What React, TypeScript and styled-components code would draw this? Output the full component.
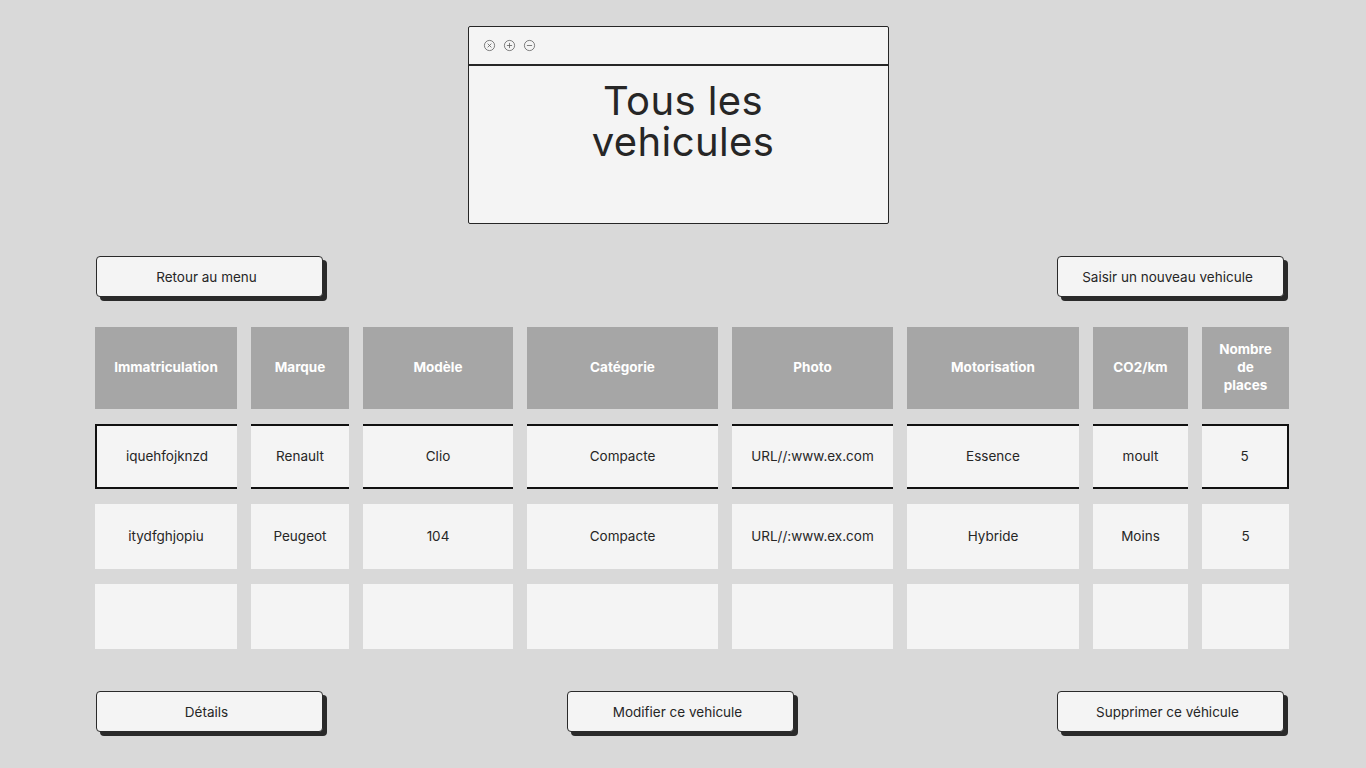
import styled, { createGlobalStyle } from "styled-components";

const GlobalStyle = createGlobalStyle`
  html, body {
    margin: 0;
    padding: 0;
    background: #d9d9d9;
  }
  body {
    font-family: Inter, "Liberation Sans", sans-serif;
    color: #222;
  }
`;

const columns = [
  { label: "Immatriculation", width: 142 },
  { label: "Marque", width: 98 },
  { label: "Modèle", width: 150 },
  { label: "Catégorie", width: 191 },
  { label: "Photo", width: 161 },
  { label: "Motorisation", width: 172 },
  { label: "CO2/km", width: 95 },
  { label: "Nombre de places", width: 87 },
];

const rows = [
  ["iquehfojknzd", "Renault", "Clio", "Compacte", "URL//:www.ex.com", "Essence", "moult", "5"],
  ["itydfghjopiu", "Peugeot", "104", "Compacte", "URL//:www.ex.com", "Hybride", "Moins", "5"],
  ["", "", "", "", "", "", "", ""],
];

function App() {
  return (
    <Page>
      <GlobalStyle />
      <WindowRow>
        <Window>
          <WindowBar>
            <WinIcon viewBox="0 0 14 14">
              <circle cx="7" cy="7" r="5.5" />
              <path d="M5 5 L9 9 M9 5 L5 9" />
            </WinIcon>
            <WinIcon viewBox="0 0 14 14">
              <circle cx="7" cy="7" r="5.5" />
              <path d="M7 4.2 V9.8 M4.2 7 H9.8" />
            </WinIcon>
            <WinIcon viewBox="0 0 14 14">
              <circle cx="7" cy="7" r="5.5" />
              <path d="M4.2 7 H9.8" />
            </WinIcon>
          </WindowBar>
          <Title>
            Tous les
            <br />
            vehicules
          </Title>
        </Window>
      </WindowRow>

      <Content>
        <Toolbar>
          <Button>Retour au menu</Button>
          <Button>Saisir un nouveau vehicule</Button>
        </Toolbar>

        <Table $cols={columns.map((c) => c.width + "px").join(" ")}>
          {columns.map((c) => (
            <HeadCell key={c.label} $narrow={c.width < 90}>
              {c.label}
            </HeadCell>
          ))}
          {rows.map((row, r) =>
            row.map((value, i) => (
              <Cell
                key={r + "-" + i}
                $selected={r === 0}
                $first={i === 0}
                $last={i === row.length - 1}
              >
                {value}
              </Cell>
            ))
          )}
        </Table>

        <Toolbar $bottom>
          <Button>Détails</Button>
          <Button $middle>Modifier ce vehicule</Button>
          <Button $end>Supprimer ce véhicule</Button>
        </Toolbar>
      </Content>
    </Page>
  );
}

export default App;

const Page = styled.div`
  width: 1366px;
  height: 768px;
  padding-top: 26px;
  box-sizing: border-box;
  overflow: hidden;
`;

const WindowRow = styled.div`
  display: flex;
  justify-content: center;
  padding-right: 9px;
`;

const Window = styled.div`
  width: 421px;
  height: 198px;
  box-sizing: border-box;
  border: 1.5px solid #262626;
  border-radius: 2px;
  background: #f4f4f4;
`;

const WindowBar = styled.div`
  height: 39px;
  box-sizing: border-box;
  border-bottom: 2.5px solid #262626;
  display: flex;
  align-items: center;
  gap: 7px;
  padding-left: 14px;
`;

const WinIcon = styled.svg`
  width: 13px;
  height: 13px;
  fill: none;
  stroke: #555;
  stroke-width: 0.8;
`;

const Title = styled.h1`
  margin: 14px 0 0;
  padding-left: 9px;
  text-align: center;
  font-family: Inter, "Liberation Sans", sans-serif;
  font-weight: 400;
  font-size: 40px;
  line-height: 41px;
  letter-spacing: 0.4px;
  color: #262626;
`;

const Content = styled.div`
  width: 1194px;
  margin: 32px 0 0 95px;
`;

const Toolbar = styled.div<{ $bottom?: boolean }>`
  display: flex;
  justify-content: space-between;
  padding: 0 5px 0 1px;
  margin-top: ${(p) => (p.$bottom ? "42px" : "0")};
`;

const Button = styled.button<{ $middle?: boolean; $end?: boolean }>`
  width: 227px;
  height: 41px;
  box-sizing: border-box;
  border: 1.5px solid #2a2a2a;
  border-radius: 4px;
  background: #f4f4f4;
  box-shadow: 4px 4px 0 #2a2a2a;
  font-family: Inter, "Liberation Sans", sans-serif;
  font-size: 13.5px;
  color: #262626;
  padding: 0 6px 0 0;
  cursor: pointer;
  margin-left: ${(p) => (p.$middle ? "244px" : p.$end ? "auto" : "0")};
  ${(p) => (p.$middle ? "margin-right: auto;" : "")}
`;

const Table = styled.div<{ $cols: string }>`
  display: grid;
  grid-template-columns: ${(p) => p.$cols};
  grid-template-rows: 82px 65px 65px 65px;
  column-gap: 14px;
  row-gap: 15px;
  margin-top: 30px;
`;

const HeadCell = styled.div<{ $narrow?: boolean }>`
  background: #a6a6a6;
  color: #ffffff;
  font-weight: 700;
  font-size: 13.5px;
  line-height: 18px;
  display: flex;
  align-items: center;
  justify-content: center;
  text-align: center;
  padding: 0 ${(p) => (p.$narrow ? "14px" : "4px")} 2px;
`;

const Cell = styled.div<{ $selected?: boolean; $first?: boolean; $last?: boolean }>`
  background: #f4f4f4;
  box-sizing: border-box;
  display: flex;
  align-items: center;
  justify-content: center;
  font-size: 13.5px;
  color: #262626;
  padding-bottom: 2px;
  border-top: ${(p) => (p.$selected ? "2px solid #111" : "none")};
  border-bottom: ${(p) => (p.$selected ? "2px solid #111" : "none")};
  border-left: ${(p) => (p.$selected && p.$first ? "2px solid #111" : "none")};
  border-right: ${(p) => (p.$selected && p.$last ? "2px solid #111" : "none")};
`;
